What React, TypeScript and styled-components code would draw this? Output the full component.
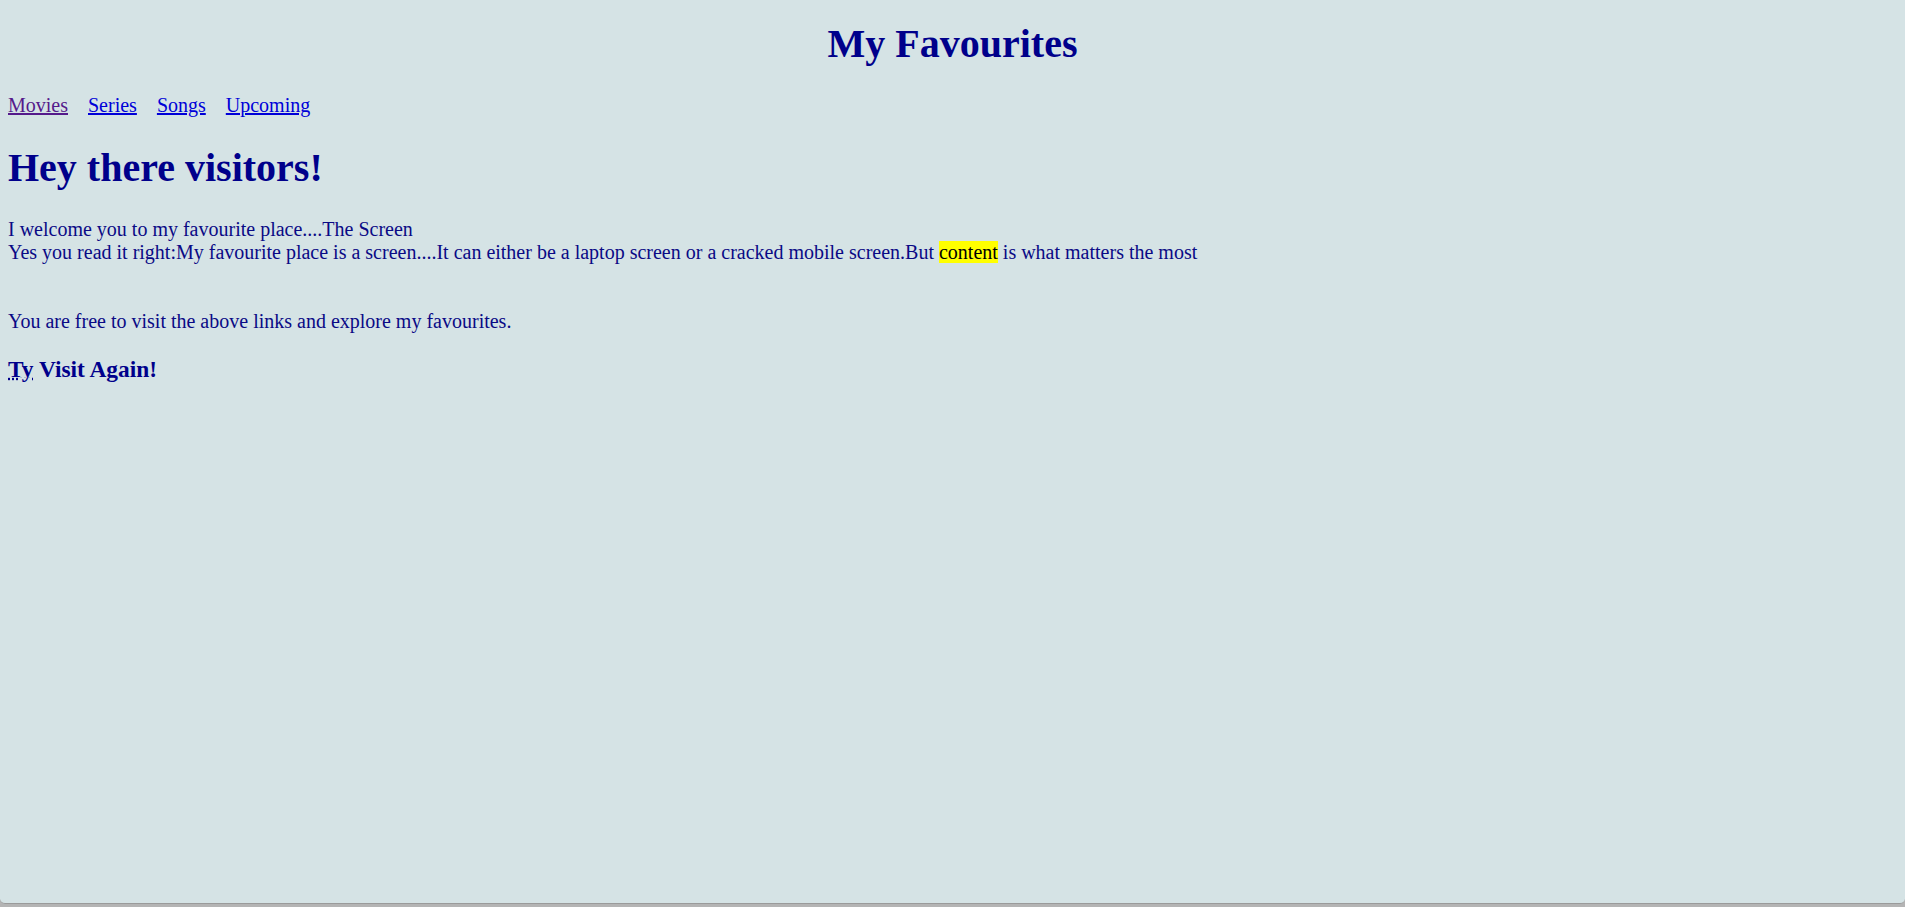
import React from "react";
import styled, { createGlobalStyle } from "styled-components";

const GlobalStyle = createGlobalStyle`
  html, body {
    margin: 0;
    padding: 0;
    background: #b4b4b4;
  }
  body {
    font-family: "Liberation Serif", "Times New Roman", serif;
    font-size: 20px;
  }
`;

const Page = styled.div`
  display: flow-root;
  box-sizing: border-box;
  min-height: calc(100vh - 3px);
  padding: 0 8px;
  background: #d5e3e5;
  border-bottom: 1px solid #9a9a9a;
  border-radius: 0 0 5px 5px;
  color: #00008b;
  font-family: "Liberation Serif", "Times New Roman", serif;
  font-size: 20px;
  line-height: normal;
`;

const Title = styled.h1`
  margin: 20px 0 27px;
  text-align: center;
  font-size: 40px;
  font-weight: bold;
  color: #00008b;
`;

const Nav = styled.nav`
  display: flex;
  gap: 20px;
  margin: 0;
`;

const NavLink = styled.a<{ $visited?: boolean }>`
  color: ${(p) => (p.$visited ? "#551a8b" : "#0000d8")};
  text-decoration: underline;
  font-size: 20px;
`;

const Heading = styled.h1`
  margin: 27px 0 27px;
  font-size: 40px;
  font-weight: bold;
  color: #00008b;
`;

const Text = styled.p`
  margin: 0;
  font-size: 20px;
  color: #0a0a85;
`;

const Highlight = styled.mark`
  background: #ffff00;
  color: #000000;
`;

const Farewell = styled.h3`
  margin: 22.5px 0 0;
  font-size: 23.4px;
  font-weight: bold;
  color: #00008b;
`;

const Abbr = styled.abbr`
  text-decoration: underline dotted;
  cursor: help;
`;

export default function App() {
  return (
    <>
      <GlobalStyle />
      <Page>
        <Title>My Favourites</Title>
        <Nav>
          <NavLink href="#movies" $visited>
            Movies
          </NavLink>
          <NavLink href="#series">Series</NavLink>
          <NavLink href="#songs">Songs</NavLink>
          <NavLink href="#upcoming">Upcoming</NavLink>
        </Nav>
        <Heading>Hey there visitors!</Heading>
        <Text>
          I welcome you to my favourite place....The Screen
          <br />
          Yes you read it right:My favourite place is a screen....It can either
          be a laptop screen or a cracked mobile screen.But{" "}
          <Highlight>content</Highlight> is what matters the most
          <br />
          <br />
          <br />
          You are free to visit the above links and explore my favourites.
        </Text>
        <Farewell>
          <Abbr title="Thank you">Ty</Abbr> Visit Again!
        </Farewell>
      </Page>
    </>
  );
}
